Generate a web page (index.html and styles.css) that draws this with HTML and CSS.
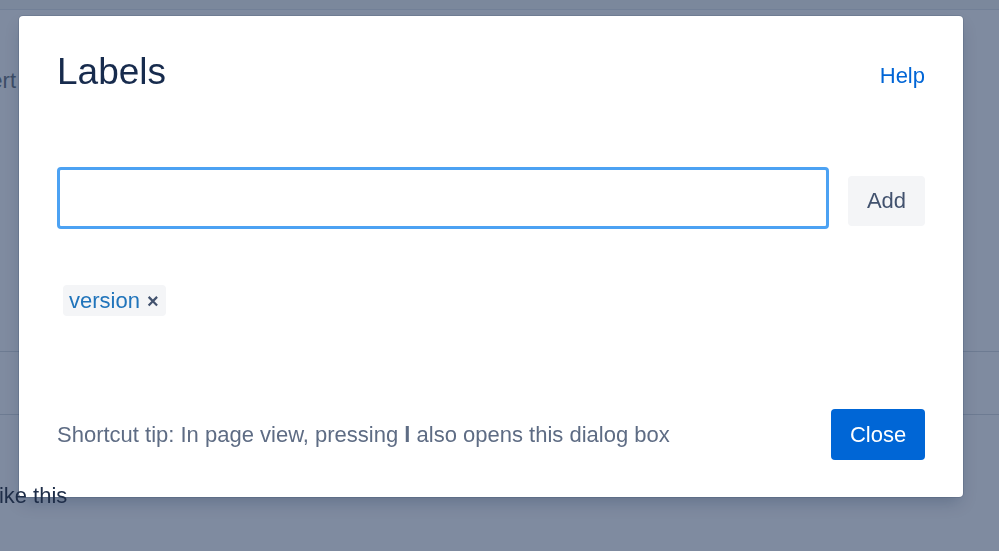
FILE: index.html
```html
<!DOCTYPE html>
<html>
<head>
<meta charset="utf-8">
<link rel="stylesheet" href="styles.css">
</head>
<body>
<div class="page">
  <div class="topbar"></div>
  <div class="bg-text bg-text-top">Insert</div>
  <div class="bg-table"></div>
  <div class="bg-text bg-text-bottom">like this</div>
</div>
<div class="dialog" role="dialog">
  <div class="dialog-header">
    <h2 class="dialog-title">Labels</h2>
    <a class="help-link" href="#">Help</a>
  </div>
  <div class="label-row">
    <input class="label-input" type="text">
    <button class="btn btn-default">Add</button>
  </div>
  <div class="labels">
    <span class="label-tag"><span class="label-name">version</span><span class="label-remove">×</span></span>
  </div>
  <div class="dialog-footer">
    <p class="tip">Shortcut tip: In page view, pressing <b>l</b> also opens this dialog box</p>
    <button class="btn btn-primary">Close</button>
  </div>
</div>
</body>
</html>
```
FILE: styles.css
```css
html, body {
  margin: 0;
  padding: 0;
  height: 100%;
  overflow: hidden;
}
body {
  background: #7f8ba0;
  font-family: "Liberation Sans", Arial, sans-serif;
}
.page {
  height: 551px;
  display: flex;
  flex-direction: column;
}
.topbar {
  height: 9px;
  background: #7b889c;
  border-bottom: 1px solid #728097;
}
.bg-text {
  font-size: 22px;
  line-height: 24px;
  color: #3d4d67;
}
.bg-text-top {
  margin-top: 59px;
  margin-left: -39px;
}
.bg-table {
  margin-top: 258px;
  height: 62px;
  border-top: 1px solid #6d7b92;
  border-bottom: 1px solid #6d7b92;
}
.bg-text-bottom {
  margin-top: 69px;
  margin-left: -6px;
  color: #1e2d48;
  position: relative;
  z-index: 2;
}
.dialog {
  position: fixed;
  left: 19px;
  top: 16px;
  width: 944px;
  height: 481px;
  box-sizing: border-box;
  background: #fff;
  border-radius: 4px;
  box-shadow: 0 0 0 1px rgba(9, 30, 66, 0.12), 0 8px 16px -4px rgba(9, 30, 66, 0.25);
  padding: 34px 38px 37px 38px;
  display: flex;
  flex-direction: column;
  z-index: 1;
}
.dialog-header {
  display: flex;
  justify-content: space-between;
  align-items: flex-start;
}
.dialog-title {
  margin: 0;
  font-size: 37px;
  line-height: 44px;
  font-weight: 400;
  color: #172b4d;
}
.help-link {
  font-size: 22px;
  line-height: 25px;
  color: #0065d6;
  text-decoration: none;
  margin-top: 13px;
}
.label-row {
  display: flex;
  align-items: center;
  gap: 19px;
  margin-top: 73px;
}
.label-input {
  flex: 1;
  height: 62px;
  box-sizing: border-box;
  border: 3px solid #4ca2f3;
  border-radius: 4px;
  outline: none;
  font: inherit;
  font-size: 22px;
  padding: 0 12px;
}
.btn {
  font-family: inherit;
  font-size: 22px;
  border: none;
  border-radius: 4px;
  cursor: pointer;
}
.btn-default {
  width: 77px;
  height: 50px;
  background: #f4f5f7;
  color: #42526e;
  margin-top: 6px;
}
.labels {
  margin-top: 56px;
  padding-left: 6px;
}
.label-tag {
  display: inline-flex;
  align-items: center;
  height: 31px;
  padding: 0 7px 0 6px;
  background: #f4f5f7;
  border-radius: 4px;
  font-size: 22px;
}
.label-name {
  color: #2074bb;
}
.label-remove {
  color: #42526e;
  font-size: 20px;
  font-weight: 700;
  margin-left: 7px;
  margin-top: 2px;
}
.dialog-footer {
  margin-top: auto;
  display: flex;
  justify-content: space-between;
  align-items: center;
}
.tip {
  margin: 0;
  font-size: 22px;
  color: #5e6c84;
}
.tip b {
  font-weight: 700;
}
.btn-primary {
  width: 94px;
  height: 51px;
  background: #0066d6;
  color: #fff;
}
```
